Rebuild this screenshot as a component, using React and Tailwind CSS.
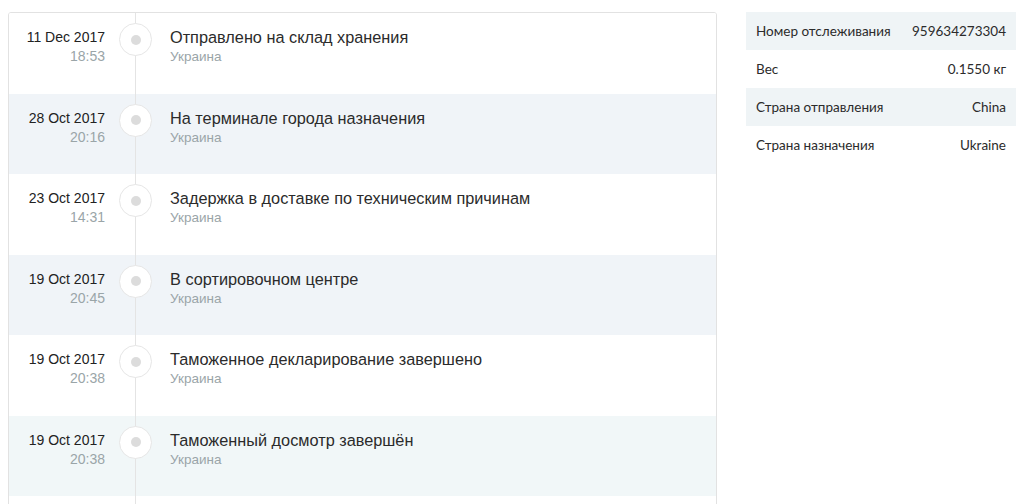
const events = [
  { date: "11 Dec 2017", time: "18:53", title: "Отправлено на склад хранения", place: "Украина", bg: "bg-white" },
  { date: "28 Oct 2017", time: "20:16", title: "На терминале города назначения", place: "Украина", bg: "bg-[#f0f4f8]" },
  { date: "23 Oct 2017", time: "14:31", title: "Задержка в доставке по техническим причинам", place: "Украина", bg: "bg-white" },
  { date: "19 Oct 2017", time: "20:45", title: "В сортировочном центре", place: "Украина", bg: "bg-[#f0f4f8]" },
  { date: "19 Oct 2017", time: "20:38", title: "Таможенное декларирование завершено", place: "Украина", bg: "bg-white" },
  { date: "19 Oct 2017", time: "20:38", title: "Таможенный досмотр завершён", place: "Украина", bg: "bg-[#f1f7f8]" },
];

const details = [
  { label: "Номер отслеживания", value: "959634273304", bg: "bg-[#eff4f6]" },
  { label: "Вес", value: "0.1550 кг", bg: "bg-white" },
  { label: "Страна отправления", value: "China", bg: "bg-[#eff4f6]" },
  { label: "Страна назначения", value: "Ukraine", bg: "bg-white" },
];

function Rail({ children }) {
  return (
    <div className="relative ml-[14px] w-[33px] shrink-0">
      <div className="absolute left-[16px] top-0 h-full w-px bg-[#e4e4e4]" />
      {children}
    </div>
  );
}

function EventRow({ item }) {
  return (
    <div className={`flex h-[80.5px] ${item.bg}`}>
      <div className="w-[96px] shrink-0 pt-[15px] text-right text-[14px] leading-[19px]">
        <div className="text-[#222]">{item.date}</div>
        <div className="text-[#9aa5a8]">{item.time}</div>
      </div>
      <Rail>
        <div className="relative mt-[10px] flex h-[33px] w-[33px] items-center justify-center rounded-full border border-[#e6e6e6] bg-white">
          <div className="h-[10px] w-[10px] rounded-full bg-[#dcdcdc]" />
        </div>
      </Rail>
      <div className="ml-[18px] pt-[14px]">
        <div className="text-[16.3px] leading-[21px] text-[#2b2b2b]">{item.title}</div>
        <div className="text-[13.5px] leading-[18px] text-[#9aa5a8]">{item.place}</div>
      </div>
    </div>
  );
}

export default function App() {
  return (
    <div
      className="flex h-[504px] w-[1024px] items-start gap-[29px] overflow-hidden bg-white pl-[8px] pr-[8px] pt-[12px]"
      style={{ fontFamily: "'Helvetica Neue', 'Liberation Sans', Arial, sans-serif" }}
    >
      <div className="w-[709px] shrink-0 overflow-hidden rounded-[3px] border border-[#e2e2e2]">
        {events.map((item, i) => (
          <EventRow key={i} item={item} />
        ))}
        {/* next entry continues below the fold */}
        <div className="flex h-[80px] bg-white">
          <div className="w-[96px] shrink-0" />
          <Rail />
        </div>
      </div>

      <div className="w-[270px] shrink-0" style={{ fontFamily: "Lato, 'Liberation Sans', sans-serif" }}>
        {details.map((d) => (
          <div
            key={d.label}
            className={`flex h-[38px] items-center justify-between px-[10px] text-[13.5px] text-[#2b2b2b] ${d.bg}`}
          >
            <span>{d.label}</span>
            <span>{d.value}</span>
          </div>
        ))}
      </div>
    </div>
  );
}
